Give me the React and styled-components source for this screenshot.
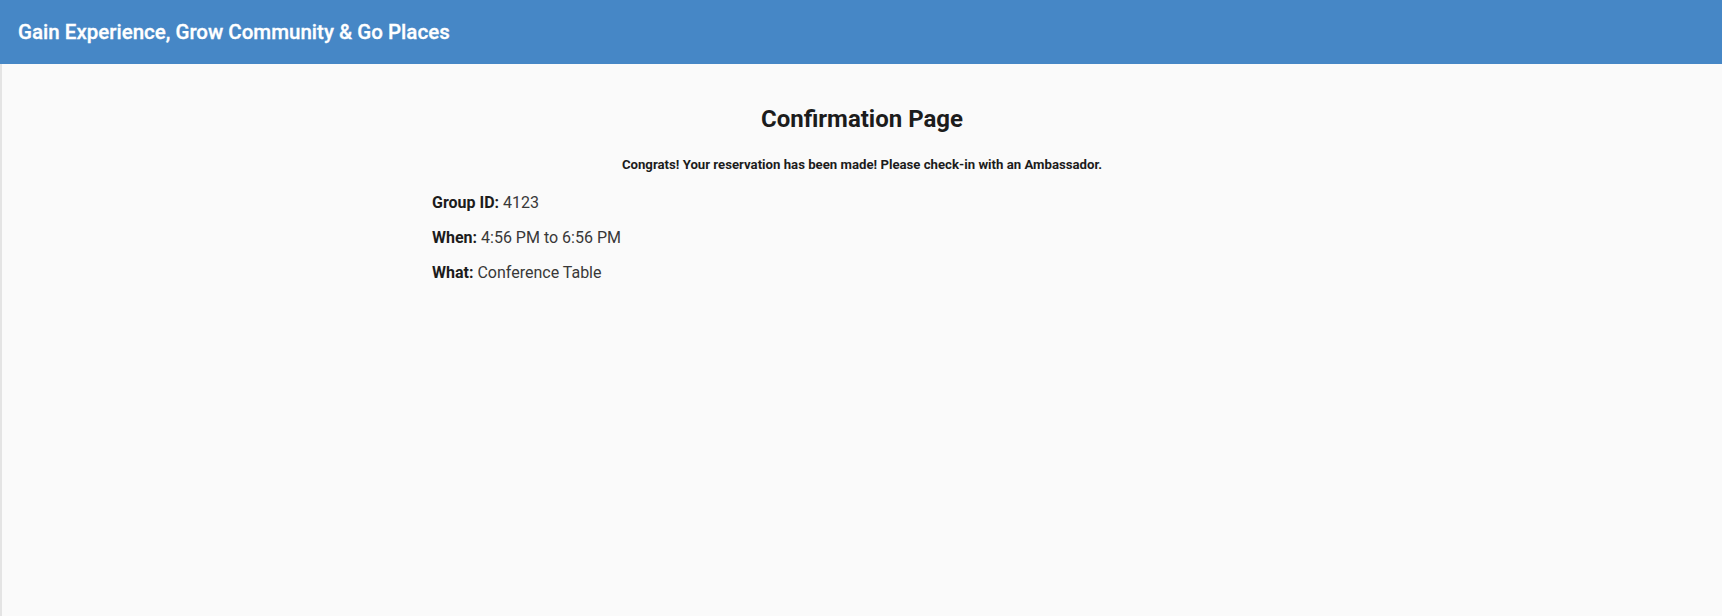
import React from 'react';
import styled, { createGlobalStyle } from 'styled-components';

const GlobalStyle = createGlobalStyle`
  html, body {
    margin: 0;
    padding: 0;
    height: 100%;
    background: #fafafa;
  }
  body {
    font-family: Roboto, "Liberation Sans", sans-serif;
    color: #212121;
  }
  #root {
    min-height: 100%;
    display: flex;
    flex-direction: column;
  }
`;

const booking = {
    groupId: '4123',
    when: '4:56 PM to 6:56 PM',
    what: 'Conference Table'
};

const App = () => {
    return (
        <Page>
            <GlobalStyle />
            <Header>
                <HeaderTitle>Gain Experience, Grow Community &amp; Go Places</HeaderTitle>
            </Header>
            <Main>
                <Title>Confirmation Page</Title>
                <Subtitle>Congrats! Your reservation has been made! Please check-in with an Ambassador.</Subtitle>
                <Details>
                    <Row>
                        <Label>Group ID:</Label> {booking.groupId}
                    </Row>
                    <Row>
                        <Label>When:</Label> {booking.when}
                    </Row>
                    <Row>
                        <Label>What:</Label> {booking.what}
                    </Row>
                </Details>
            </Main>
        </Page>
    );
};

// Styled Components
const Page = styled.div`
  display: flex;
  flex-direction: column;
  min-height: 616px;
`;

const Header = styled.header`
  height: 64px;
  background-color: #4687c6;
  display: flex;
  align-items: center;
  padding: 0 18px;
  box-sizing: border-box;
`;

const HeaderTitle = styled.h1`
  margin: 0;
  font-family: "Roboto Medium", Roboto, "Liberation Sans", sans-serif;
  font-size: 20.5px;
  font-weight: 500;
  color: #fff;
  -webkit-text-stroke: 0.3px #fff;
`;

const Main = styled.main`
  flex: 1;
  border-left: 2px solid #e4e4e4;
  padding-top: 41px;
  display: flex;
  flex-direction: column;
  align-items: center;
`;

const Title = styled.h2`
  margin: 0;
  font-size: 24px;
  font-weight: 700;
  line-height: 28px;
  color: #1c1c1c;
`;

const Subtitle = styled.p`
  margin: 24px 0 0;
  font-size: 13.2px;
  font-weight: 700;
  line-height: 15px;
  color: #1c1c1c;
`;

const Details = styled.div`
  width: 50%;
  margin-top: 21px;
  display: flex;
  flex-direction: column;
  gap: 16px;
`;

const Row = styled.p`
  margin: 0;
  font-size: 16px;
  font-weight: 400;
  line-height: 19px;
  color: #383838;
`;

const Label = styled.b`
  font-weight: 700;
  color: #1c1c1c;
`;

export default App;
